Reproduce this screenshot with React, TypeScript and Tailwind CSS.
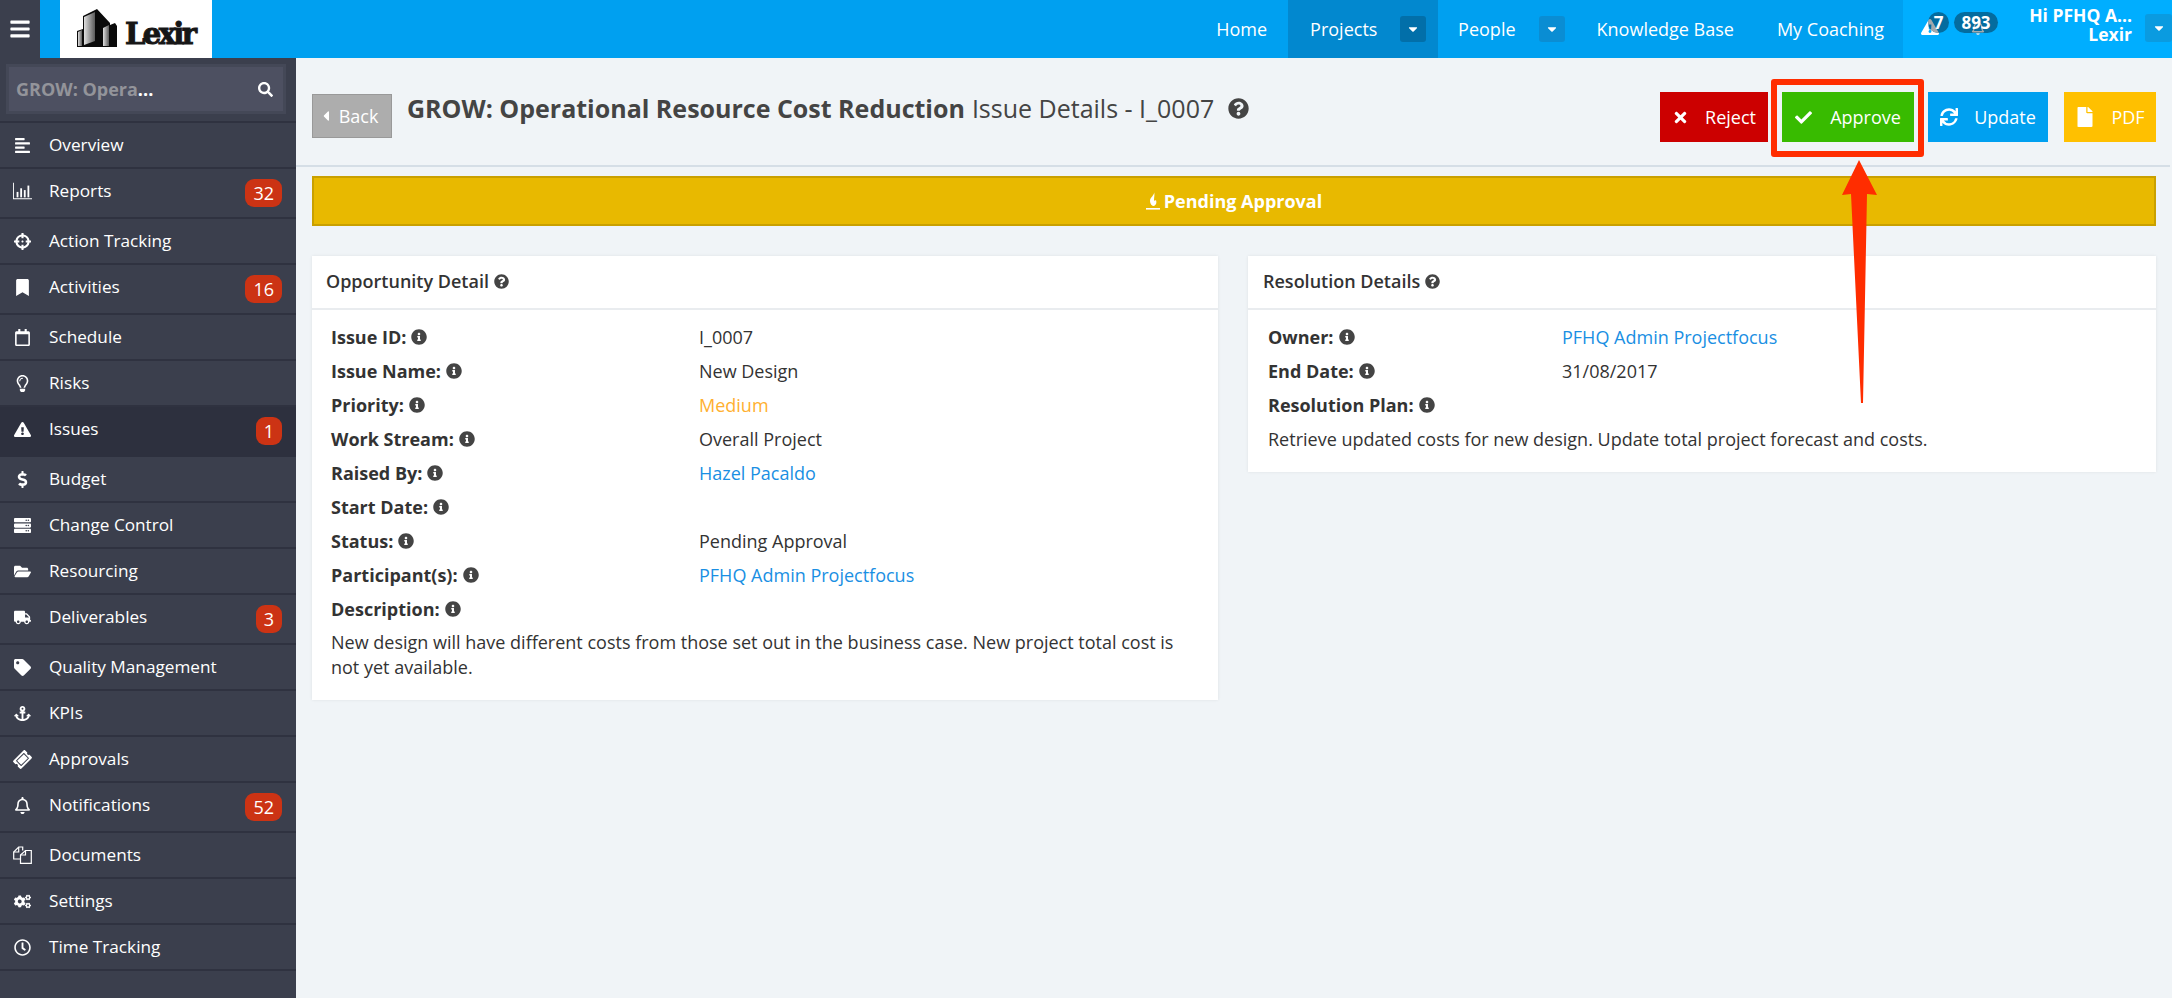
import React from 'react';
import {
  FaAlignLeft, FaAnchor, FaBars, FaBookmark, FaCaretDown, FaCaretLeft, FaCheck, FaCogs, FaCrosshairs,
  FaDollarSign, FaExclamationTriangle, FaFile, FaFolderOpen, FaInfoCircle, FaQuestionCircle, FaRegBell,
  FaRegCalendar, FaRegClock, FaRegLightbulb, FaSearch, FaServer, FaSync, FaTag, FaTicketAlt, FaTimes, FaTruck,
} from 'react-icons/fa';

const font = 'font-["Open_Sans",sans-serif]';

const BarsIcon = () => (
  <svg width="21" height="18" viewBox="0 0 21 18" fill="white">
    <path d="M0 0h1v17h20v1H0z" />
    <rect x="4" y="10" width="2" height="6" />
    <rect x="8" y="6" width="2" height="10" />
    <rect x="12" y="8" width="2" height="8" />
    <rect x="16" y="3" width="2" height="13" />
  </svg>
);

const FilesIcon = () => (
  <svg width="19" height="18" viewBox="0 0 19 18" fill="none" stroke="white" strokeWidth="1.2">
    <path d="M7.5 13H.7V6l5-5h4v3.5" />
    <path d="M5.7 1v5H.7" />
    <path d="M7.5 17.4V9l5-4.5h5.8v12.9z" />
    <path d="M12.5 4.5V9H7.5" />
  </svg>
);

const TicketIcon = () => <FaTicketAlt className="-rotate-45" />;

const menu = [
  { label: 'Overview', icon: FaAlignLeft },
  { label: 'Reports', icon: BarsIcon, badge: '32' },
  { label: 'Action Tracking', icon: FaCrosshairs },
  { label: 'Activities', icon: FaBookmark, badge: '16' },
  { label: 'Schedule', icon: FaRegCalendar },
  { label: 'Risks', icon: FaRegLightbulb },
  { label: 'Issues', icon: FaExclamationTriangle, badge: '1', active: true },
  { label: 'Budget', icon: FaDollarSign },
  { label: 'Change Control', icon: FaServer },
  { label: 'Resourcing', icon: FaFolderOpen },
  { label: 'Deliverables', icon: FaTruck, badge: '3' },
  { label: 'Quality Management', icon: FaTag },
  { label: 'KPIs', icon: FaAnchor },
  { label: 'Approvals', icon: TicketIcon },
  { label: 'Notifications', icon: FaRegBell, badge: '52' },
  { label: 'Documents', icon: FilesIcon },
  { label: 'Settings', icon: FaCogs },
  { label: 'Time Tracking', icon: FaRegClock },
];

const CaretBox = ({ className }: { className: string }) => (
  <span className={`flex items-center justify-center rounded-[3px] text-white ${className}`}>
    <FaCaretDown className="text-[14px]" />
  </span>
);

const Sidebar = () => (
  <aside className="w-[296px] shrink-0 bg-[#3b3f4d]">
    <div className="h-[65px] pt-[6px] pl-[6px] pr-[10px] border-b-2 border-[#2f3240]">
      <div className="h-[50px] border-[3px] border-[#444857] bg-[#4d5061] flex items-center justify-between pl-[7px] pr-[10px]">
        <span className="text-[18px] font-bold text-[#93949a] leading-none">
          GROW: Opera<span className="text-white">...</span>
        </span>
        <FaSearch className="text-white text-[15px]" />
      </div>
    </div>
    {menu.map(item => (
      <div
        key={item.label}
        className={`flex items-center pl-[13px] pr-[14px] border-b-2 ${item.badge ? 'h-[50px]' : 'h-[46px]'} ${item.active ? 'bg-[#2d303e] border-[#2d303e]' : 'border-[#2f3240]'}`}
      >
        <span className={`w-[19px] flex justify-center text-white text-[17px] ${item.badge ? 'mb-[4px]' : ''}`}>
          <item.icon />
        </span>
        <span className={`ml-[17px] text-[17.2px] text-white flex-1 ${item.badge ? 'mb-[4px]' : ''}`}>{item.label}</span>
        {item.badge && (
          <span className="h-[28px] px-[8px] rounded-[9px] bg-[#cc3314] text-white text-[18px] leading-[28px] text-center">
            {item.badge}
          </span>
        )}
      </div>
    ))}
  </aside>
);

const Logo = () => (
  <div className="w-[152px] h-[58px] bg-white flex items-center pl-[17px]">
    <svg width="41" height="39" viewBox="0 0 41 39" className="mt-[-1px] shrink-0">
      <defs>
        <linearGradient id="bld" x1="0" y1="0" x2="1" y2="0">
          <stop offset="0" stopColor="#e0e0e0" />
          <stop offset="1" stopColor="#5a5a5a" />
        </linearGradient>
      </defs>
      <path d="M0 38V22l6-2V7L20 0l13 14v2l5-2 2 3v21z" fill="#0a0a0a" />
      <path d="M1 37V23l4-2v16z" fill="url(#bld)" />
      <path d="M7 36V8l11-5v29z" fill="url(#bld)" />
      <path d="M26 37V19l6-3v21z" fill="url(#bld)" />
    </svg>
    <span className="ml-[7px] font-['DejaVu_Serif',serif] font-bold text-[29px] text-[#161616] leading-none mt-[11px] tracking-[-2.6px] [-webkit-text-stroke:1px_#161616]">Lexir</span>
  </div>
);

const Header = () => (
  <header className="h-[58px] flex bg-[#00a0f0]">
    <div className="w-[40px] bg-[#3b3f4d] flex items-center justify-center text-white text-[22px]">
      <FaBars />
    </div>
    <div className="w-[20px]" />
    <Logo />
    <nav className="flex-1 flex justify-end items-stretch text-white text-[18px]">
      <span className="flex items-center pr-[21px]">Home</span>
      <div className="w-[150px] bg-[#0288cf] flex items-center pl-[22px]">
        <span>Projects</span>
        <CaretBox className="ml-[23px] w-[26px] h-[26px] bg-[#026fa9]" />
      </div>
      <span className="flex items-center pl-[20px]">People</span>
      <CaretBox className="self-center ml-[23px] w-[26px] h-[26px] bg-[#0a8dd3]" />
      <span className="flex items-center pl-[32px]">Knowledge Base</span>
      <span className="flex items-center pl-[43px] pr-[19px]">My Coaching</span>
    </nav>
    <div className="w-[269px] bg-[#00aeff] flex items-center text-white relative">
      <FaExclamationTriangle className="absolute left-[18px] top-[18px] text-[18px]" />
      <FaRegBell className="absolute left-[68px] top-[21px] text-[14px] text-[#d5dfe6]" />
      <span className="absolute left-[25px] top-[12px] h-[21px] w-[21px] rounded-full bg-[#046c9f] overflow-hidden text-[17px] font-bold text-center leading-[21px]">
        <FaExclamationTriangle className="absolute left-[-7px] top-[6px] text-[18px] text-[#a3a9ad]" />
        <span className="relative">7</span>
      </span>
      <span className="absolute left-[51px] top-[12px] h-[21px] w-[44px] rounded-full bg-[#046c9f] overflow-hidden text-[17px] font-bold text-center leading-[21px]">
        <FaRegBell className="absolute left-[17px] top-[9px] text-[14px] text-[#a3a9ad]" />
        <span className="relative">893</span>
      </span>
      <div className="absolute right-[40px] top-[6px] text-right text-[17.5px] font-bold leading-[19px]">
        <div>Hi PFHQ A...</div>
        <div>Lexir</div>
      </div>
      <CaretBox className="absolute right-0 top-[14px] w-[27px] h-[28px] bg-[#0a9be0]" />
    </div>
  </header>
);

const ActionButton = ({ icon: Icon, label, className, gap, iconClass }: { icon: React.ElementType; label: string; className: string; gap: string; iconClass: string }) => (
  <button className={`h-[50px] flex items-center justify-center text-white text-[18px] ${className}`}>
    <Icon className={iconClass} />
    <span className={gap}>{label}</span>
  </button>
);

const Row = ({ label, value, valueClass, col }: { label: string; value?: string; valueClass?: string; col: string }) => (
  <div className="flex h-[34px] items-center">
    <div className={`${col} flex items-center font-bold`}>
      {label}
      <FaInfoCircle className="ml-[5px] text-[16px] text-[#444]" />
    </div>
    {value && <div className={valueClass}>{value}</div>}
  </div>
);

const Card = ({ title, className, children }: { title: string; className: string; children: React.ReactNode }) => (
  <section className={`bg-white shadow-[0_0_3px_rgba(0,0,0,0.08)] ${className}`}>
    <div className="h-[54px] pb-[2px] border-b-2 border-[#e9ecef] flex items-center font-semibold text-[18px] text-[#333]">
      {title}
      <FaQuestionCircle className="ml-[5px] text-[15px] text-[#444]" />
    </div>
    {children}
  </section>
);

const link = 'text-[#1a8fe3]';

const FlameIcon = () => (
  <svg width="14" height="18" viewBox="0 0 14 18" fill="white" className="mr-[4px]">
    <path d="M8 0c1 3-4 5-4 9 0 3 2 5 4 5 2-1 3-3 2-6-1 1-2 1-2 0 0-3 1-6 0-8z" />
    <rect x="0" y="16" width="14" height="1.6" />
  </svg>
);

const App = () => (
  <div className={`w-[2172px] h-[998px] overflow-hidden bg-[#f0f4f7] text-[18px] text-[#333] relative ${font}`}>
    <Header />
    <div className="flex h-[940px]">
      <Sidebar />
      <main className="flex-1 min-w-0">
        <div className="h-[109px] pl-[16px] pr-[14px] border-b-2 border-[#d5dee6] mr-[2px] flex items-start">
          <button className="mt-[36px] w-[80px] h-[44px] pr-[8px] bg-[#adadad] border border-[#999] flex items-center justify-center text-white text-[18px]">
            <FaCaretLeft className="text-[16px] mr-[5px]" />
            Back
          </button>
          <h1 className="ml-[15px] mt-[32px] text-[25px] leading-[36px] text-[#444] font-normal flex items-center whitespace-nowrap">
            <b className="font-bold">GROW: Operational Resource Cost Reduction</b>
            <span className="ml-[7px]">Issue Details - I_0007</span>
            <FaQuestionCircle className="ml-[14px] text-[21px]" />
          </h1>
          <div className="ml-auto mt-[34px] flex">
            <ActionButton icon={FaTimes} iconClass="text-[17px]" label="Reject" className="w-[108px] bg-[#cc0000]" gap="ml-[16px]" />
            <ActionButton icon={FaCheck} iconClass="text-[17px]" label="Approve" className="ml-[14px] w-[132px] bg-[#38bb00]" gap="ml-[18px]" />
            <ActionButton icon={FaSync} iconClass="text-[18px]" label="Update" className="ml-[14px] w-[120px] bg-[#00a0f0]" gap="ml-[16px]" />
            <ActionButton icon={FaFile} iconClass="text-[20px]" label="PDF" className="ml-[16px] w-[92px] bg-[#ffc000]" gap="ml-[16px]" />
          </div>
        </div>
        <div className="ml-[16px] mr-[16px] mt-[9px] h-[50px] bg-[#e8b900] border-2 border-[#c9a000] flex items-center justify-center text-white font-bold text-[18px]">
          <FlameIcon />
          Pending Approval
        </div>
        <div className="mx-[16px] mt-[30px] flex items-start gap-[30px]">
          <Card title="Opportunity Detail" className="w-[906px] shrink-0 [&>div:first-child]:pl-[14px]">
            <div className="px-[19px] pt-[10px] pb-[20px]">
              <Row col="w-[368px]" label="Issue ID:" value="I_0007" />
              <Row col="w-[368px]" label="Issue Name:" value="New Design" />
              <Row col="w-[368px]" label="Priority:" value="Medium" valueClass="text-[#ffb030]" />
              <Row col="w-[368px]" label="Work Stream:" value="Overall Project" />
              <Row col="w-[368px]" label="Raised By:" value="Hazel Pacaldo" valueClass={link} />
              <Row col="w-[368px]" label="Start Date:" />
              <Row col="w-[368px]" label="Status:" value="Pending Approval" />
              <Row col="w-[368px]" label="Participant(s):" value="PFHQ Admin Projectfocus" valueClass={link} />
              <Row col="w-[368px]" label="Description:" />
              <p className="leading-[25px] mt-[4px]">
                New design will have different costs from those set out in the business case. New project total cost is not yet available.
              </p>
            </div>
          </Card>
          <Card title="Resolution Details" className="flex-1 [&>div:first-child]:pl-[15px]">
            <div className="pl-[20px] pr-[21px] pt-[10px] pb-[20px]">
              <Row col="w-[294px]" label="Owner:" value="PFHQ Admin Projectfocus" valueClass={link} />
              <Row col="w-[294px]" label="End Date:" value="31/08/2017" />
              <Row col="w-[294px]" label="Resolution Plan:" />
              <p className="leading-[25px] mt-[5px]">Retrieve updated costs for new design. Update total project forecast and costs.</p>
            </div>
          </Card>
        </div>
      </main>
    </div>

    {/* annotation drawn over the screenshot */}
    <div className="absolute left-[1771px] top-[79px] w-[153px] h-[78px] border-[6px] border-[#ff2d00] rounded-[3px]" />
    <svg className="absolute left-[1835px] top-[155px]" width="50" height="255" viewBox="0 0 50 255">
      <path d="M24 5L7 40l9-1 10 209h2L32 39l10 1z" fill="#ff2d00" />
    </svg>
  </div>
);

export default App;
